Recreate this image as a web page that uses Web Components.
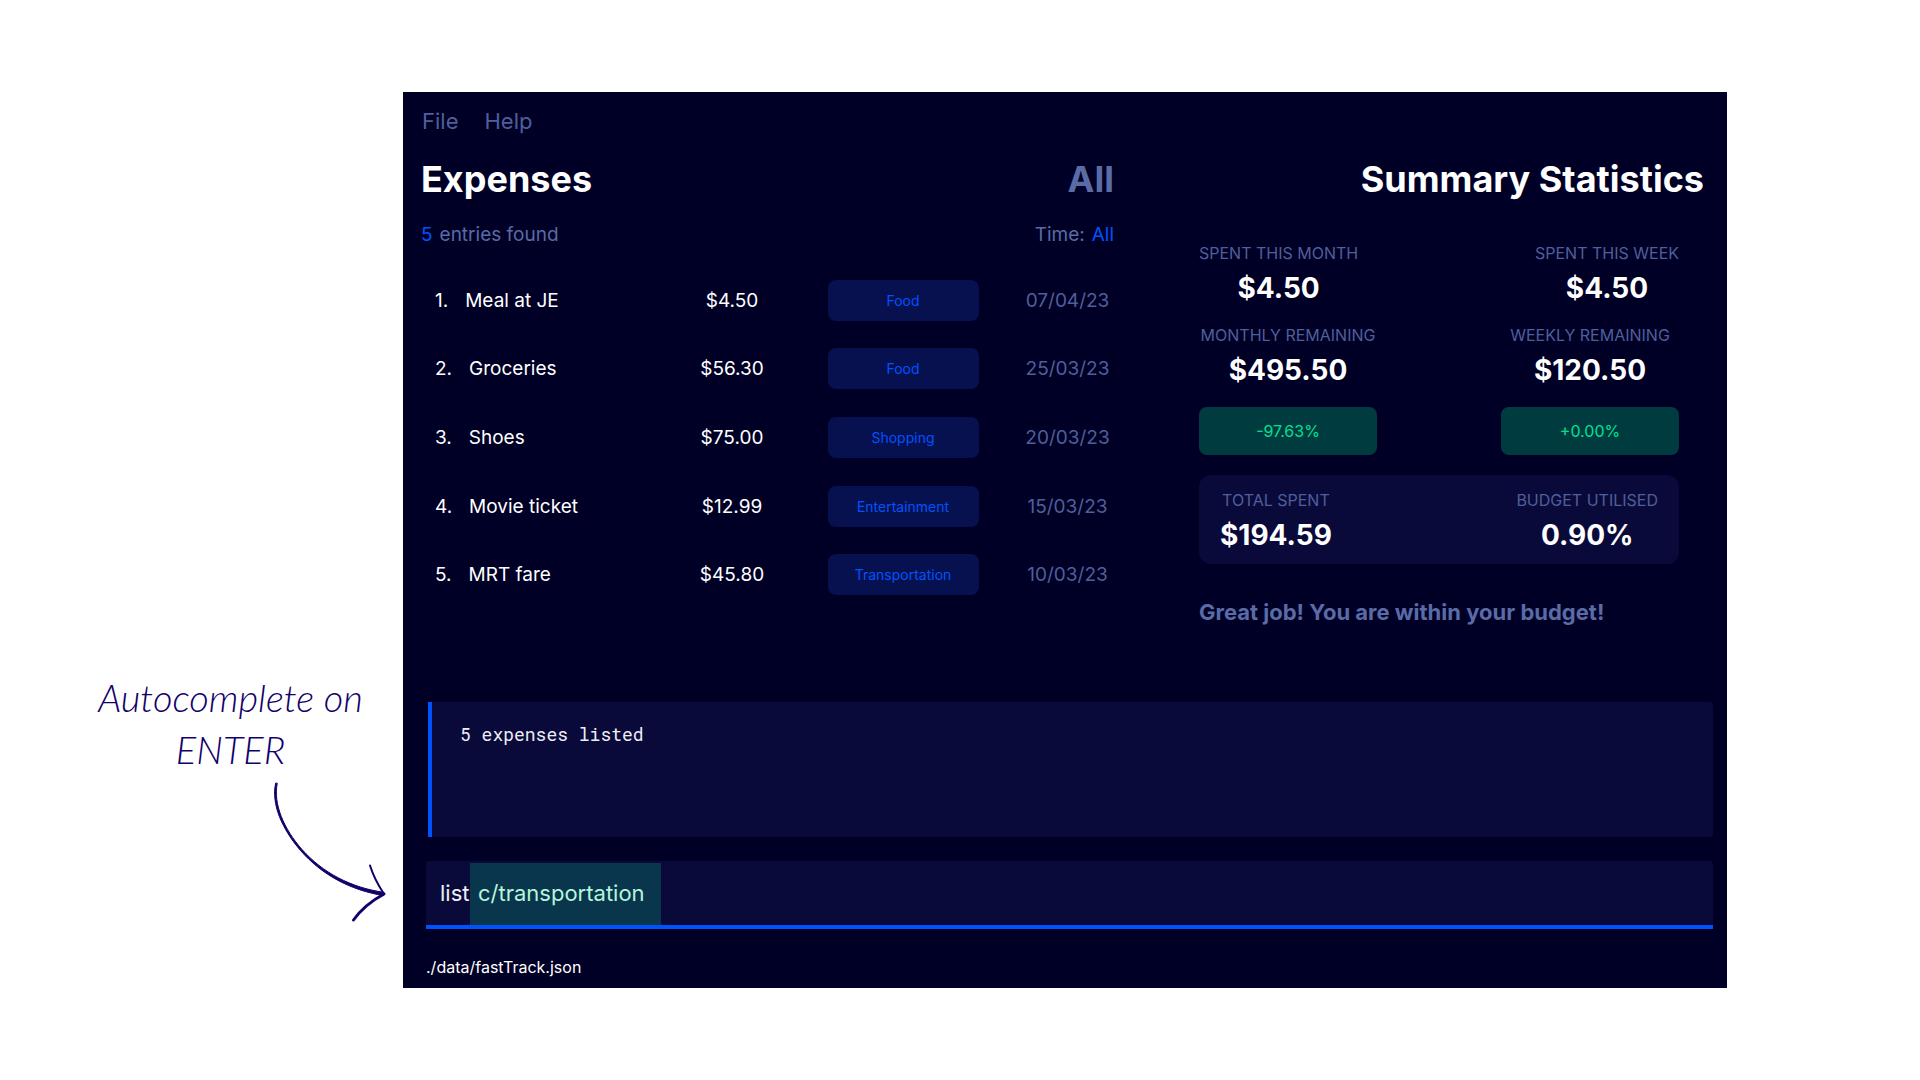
<!DOCTYPE html>
<html lang="en">
<head>
<meta charset="utf-8">
<title>fastTrack</title>
<style>
  html, body { margin: 0; }
  body {
    --bg: #000026;
    --panel: #0a0a3a;
    --blue: #0052ff;
    --tag-bg: #07114f;
    --muted: #5a6ba5;
    --label: #4f5f9a;
    --good-bg: #003b40;
    --good: #00e08f;
    --ink: #13006b;
    background: #fff;
    color: #fff;
    font-family: Inter, "Liberation Sans", sans-serif;
  }
</style>
</head>
<body>
<tutorial-page>
  <callout-note slot="note">Autocomplete on<br>ENTER</callout-note>
  <app-window>
    <menu-bar slot="menu"></menu-bar>
    <expense-panel slot="main"></expense-panel>
    <summary-panel slot="main"></summary-panel>
    <result-display slot="console">5 expenses listed</result-display>
    <command-box slot="console" value="list" suggestion="c/transportation"></command-box>
    <span slot="status">./data/fastTrack.json</span>
  </app-window>
</tutorial-page>

<script>
const define = (name, markup, setup) => {
  const template = document.createElement('template');
  template.innerHTML = markup;
  customElements.define(name, class extends HTMLElement {
    constructor() {
      super();
      this.attachShadow({ mode: 'open' }).append(template.content.cloneNode(true));
    }
    connectedCallback() { if (setup) setup(this, this.shadowRoot); }
  });
};

define('tutorial-page', `
  <style>
    :host { display: grid; grid-template-columns: 403px minmax(0, 1fr); min-height: 100vh; box-sizing: border-box; padding: 92px 193px 92px 0; }
  </style>
  <slot name="note"></slot>
  <slot></slot>
`);

define('callout-note', `
  <style>
    :host { display: flex; flex-direction: column; align-items: center; align-self: start; padding: 579px 0 0 58px; color: var(--ink); }
    p { margin: 0; font: italic 300 38px/52px Lato, "Open Sans", sans-serif; text-align: center; }
    svg { display: block; align-self: flex-start; margin: 5px 0 0 214px; }
  </style>
  <p><slot></slot></p>
  <svg width="116" height="144" viewBox="272 780 116 144" fill="currentColor" stroke="currentColor" stroke-linecap="round" stroke-linejoin="round" aria-hidden="true">
    <path stroke-width="1" d="M275.6 783.4 C271 804 282 829 300.5 850.5 C322 875 350 890 383.5 895.6 L384 892.4 C351 887.5 323 873 302 849.5 C284 829 273 804 277.2 783.6 Z"/>
    <path fill="none" stroke-width="2" d="M370 865.5 C373 875 378 885 384 894"/>
    <path fill="none" stroke-width="3" d="M384 894 C373 900 362 908 353.5 920"/>
  </svg>
`);

define('app-window', `
  <style>
    :host { display: flex; flex-direction: column; background: var(--bg); }
    main { flex: 1; display: grid; grid-template-columns: minmax(0, 693fr) minmax(0, 505fr); gap: 85px; padding: 22px 23px 0 18px; }
    footer { padding: 27px 23px 10px; font-size: 16px; line-height: 22px; }
  </style>
  <slot name="menu"></slot>
  <main><slot name="main"></slot></main>
  <slot name="console"></slot>
  <footer><slot name="status"></slot></footer>
`);

define('menu-bar', `
  <style>
    :host { display: block; padding: 15px 19px 0; }
    nav { display: flex; gap: 26px; }
    button { all: unset; cursor: pointer; color: var(--label); font-size: 22px; line-height: 28px; }
  </style>
  <nav aria-label="Menu"><button type="button">File</button><button type="button">Help</button></nav>
`);

define('category-tag', `
  <style>
    :host { display: inline-block; box-sizing: border-box; width: 151px; border-radius: 8px; background: var(--tag-bg); color: var(--blue); font-size: 14px; line-height: 41px; text-align: center; vertical-align: middle; }
  </style>
  <slot></slot>
`);

const expenses = [
  ['Meal at JE', '$4.50', 'Food', '07/04/23'],
  ['Groceries', '$56.30', 'Food', '25/03/23'],
  ['Shoes', '$75.00', 'Shopping', '20/03/23'],
  ['Movie ticket', '$12.99', 'Entertainment', '15/03/23'],
  ['MRT fare', '$45.80', 'Transportation', '10/03/23'],
];

define('expense-panel', `
  <style>
    :host { display: block; }
    header, .meta { display: flex; justify-content: space-between; }
    h2 { margin: 0; font-size: 36px; line-height: 44px; font-weight: 700; }
    .filter, .meta { color: var(--muted); }
    .meta { margin: 22px 0 19px; font-size: 19px; line-height: 24px; }
    .meta span { display: flex; gap: 7px; }
    b { font-weight: 400; color: var(--blue); }
    table { width: 100%; height: 343px; table-layout: fixed; border-collapse: collapse; font-size: 19px; }
    td { padding: 0; text-align: center; }
    .amount { width: 106px; }
    .tag { width: 236px; }
    .date { width: 93px; color: var(--label); white-space: nowrap; }
    .name div { display: flex; gap: 17px; padding-left: 14px; }
  </style>
  <header><h2>Expenses</h2><h2 class="filter">All</h2></header>
  <div class="meta"><span><b>5</b>entries found</span><span>Time:<b>All</b></span></div>
  <table aria-label="Expenses"><tbody></tbody></table>
`, (host, root) => {
  root.querySelector('tbody').innerHTML = expenses.map(([name, amount, tag, date], i) => `
    <tr>
      <td class="name"><div><span>${i + 1}.</span><span>${name}</span></div></td>
      <td class="amount">${amount}</td>
      <td class="tag"><category-tag>${tag}</category-tag></td>
      <td class="date">${date}</td>
    </tr>`).join('');
});

define('stat-figure', `
  <style>
    :host { display: grid; gap: 6px; justify-items: center; width: max-content; }
    .label { color: var(--label); font-size: 16px; line-height: 22px; }
    .value { font-size: 28px; line-height: 36px; font-weight: 700; }
  </style>
  <span class="label"></span>
  <span class="value"><slot></slot></span>
`, (host, root) => {
  root.querySelector('.label').textContent = host.getAttribute('label');
});

define('change-badge', `
  <style>
    :host { display: block; width: 178px; border-radius: 8px; background: var(--good-bg); color: var(--good); font-size: 16px; line-height: 48px; text-align: center; }
  </style>
  <slot></slot>
`);

define('summary-panel', `
  <style>
    :host { display: block; }
    h2 { margin: 0; font-size: 36px; line-height: 44px; font-weight: 700; text-align: right; }
    .body { padding: 41px 25px 0 0; }
    .row { display: flex; justify-content: space-between; margin-bottom: 18px; }
    .column { display: grid; justify-items: center; gap: 19px; }
    .card { display: flex; justify-content: space-between; margin-top: 20px; padding: 14px 21px 11px; border-radius: 12px; background: var(--panel); }
    .message { margin: 34px 0 0; color: var(--muted); font-size: 22px; line-height: 28px; font-weight: 700; }
  </style>
  <h2>Summary Statistics</h2>
  <div class="body">
    <div class="row">
      <stat-figure label="SPENT THIS MONTH">$4.50</stat-figure>
      <stat-figure label="SPENT THIS WEEK">$4.50</stat-figure>
    </div>
    <div class="row">
      <div class="column"><stat-figure label="MONTHLY REMAINING">$495.50</stat-figure><change-badge>-97.63%</change-badge></div>
      <div class="column"><stat-figure label="WEEKLY REMAINING">$120.50</stat-figure><change-badge>+0.00%</change-badge></div>
    </div>
    <div class="card">
      <stat-figure label="TOTAL SPENT">$194.59</stat-figure>
      <stat-figure label="BUDGET UTILISED">0.90%</stat-figure>
    </div>
    <p class="message">Great job! You are within your budget!</p>
  </div>
`);

define('result-display', `
  <style>
    :host { display: block; box-sizing: border-box; height: 135px; margin: 0 14px 24px 25px; padding: 20px 28px; border-left: 4px solid var(--blue); border-radius: 0 4px 4px 0; background: var(--panel); color: #eeeef6; font: 18px/24px "Roboto Mono", "Liberation Mono", monospace; }
  </style>
  <slot></slot>
`);

define('command-box', `
  <style>
    :host { display: block; margin: 0 14px 0 23px; }
    label { display: flex; box-sizing: border-box; height: 68px; padding: 2px 0 0 14px; border-bottom: 4px solid var(--blue); border-radius: 4px 4px 0 0; background: var(--panel); font-size: 22px; line-height: 60px; cursor: text; }
    input { all: unset; align-self: flex-start; width: 30px; height: 60px; color: #eeeef6; }
    output { padding: 0 16px 0 8px; background: #09364c; color: #b5f5dc; }
  </style>
  <label><input type="text" aria-label="Command"><output></output></label>
`, (host, root) => {
  root.querySelector('input').value = host.getAttribute('value');
  root.querySelector('output').textContent = host.getAttribute('suggestion');
});
</script>
</body>
</html>
